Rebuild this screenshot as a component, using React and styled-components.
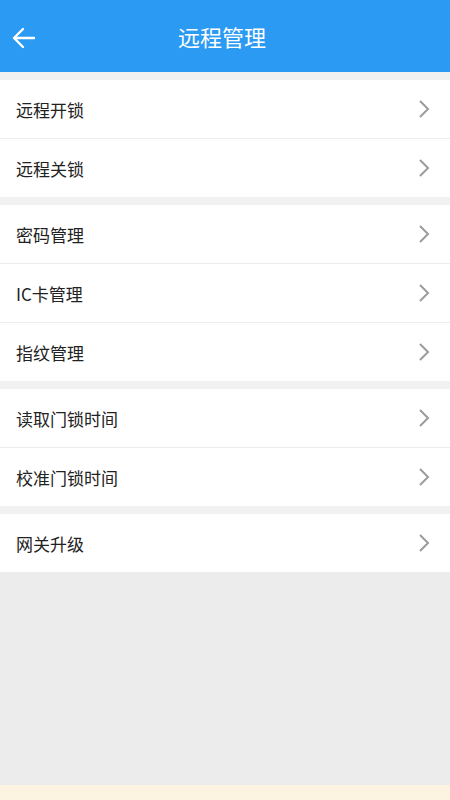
import styled, { createGlobalStyle } from "styled-components"

const GlobalStyle = createGlobalStyle`
  html, body {
    margin: 0;
    padding: 0;
    background: #ececec;
  }
  * {
    box-sizing: border-box;
  }
`;

const Page = styled.div`
  width: 450px;
  height: 800px;
  display: flex;
  flex-direction: column;
  background: #ececec;
  font-family: "Noto Sans CJK SC", "Noto Sans", sans-serif;
`;
const Header = styled.div`
  height: 72px;
  flex-shrink: 0;
  background: #2b9af3;
  display: flex;
  align-items: center;
  justify-content: center;
  position: relative;
`;
const Back = styled.button`
  position: absolute;
  left: 10px;
  top: 24px;
  width: 28px;
  height: 28px;
  padding: 0;
  border: none;
  background: none;
  display: flex;
  align-items: center;
  justify-content: center;
`;
const Title = styled.h1`
  margin: 0 0 0 -6px;
  font-size: 22px;
  font-weight: 400;
  color: #fff;
`;
const Body = styled.div`
  flex: 1;
  display: flex;
  flex-direction: column;
  background: #f1f1f1;
`;
const Group = styled.div`
  margin-top: 8px;
  background: #fff;
`;
const Row = styled.div`
  height: ${p => (p.last ? 58 : 59)}px;
  padding: 0 19px 0 16px;
  display: flex;
  align-items: center;
  justify-content: space-between;
  border-bottom: ${p => (p.last ? "none" : "1px solid #ececec")};
`;
const Label = styled.span`
  font-size: 17px;
  color: #222;
`;
const Filler = styled.div`
  flex: 1;
  background: #ececec;
`;
const Footer = styled.div`
  height: 15px;
  background: #fcf4e1;
`;

const Chevron = () => (
  <svg width="14" height="20" viewBox="0 0 14 20">
    <path d="M3 2 L11 10 L3 18" fill="none" stroke="#9b9b9b" strokeWidth="2" />
  </svg>
);

const groups = [
  ["远程开锁", "远程关锁"],
  ["密码管理", "IC卡管理", "指纹管理"],
  ["读取门锁时间", "校准门锁时间"],
  ["网关升级"],
];

const App = () => {
  return (
    <Page>
      <GlobalStyle />
      <Header>
        <Back>
          <svg width="24" height="22" viewBox="0 0 24 22">
            <path d="M22 11 H3 M11 2 L2 11 L11 20" fill="none" stroke="#fff" strokeWidth="2.4" strokeLinecap="round" strokeLinejoin="round" />
          </svg>
        </Back>
        <Title>远程管理</Title>
      </Header>
      <Body>
        {groups.map((items, gi) => (
          <Group key={gi}>
            {items.map((t, i) => (
              <Row key={t} last={i === items.length - 1}>
                <Label>{t}</Label>
                <Chevron />
              </Row>
            ))}
          </Group>
        ))}
        <Filler />
        <Footer />
      </Body>
    </Page>
  )
}

export default App
